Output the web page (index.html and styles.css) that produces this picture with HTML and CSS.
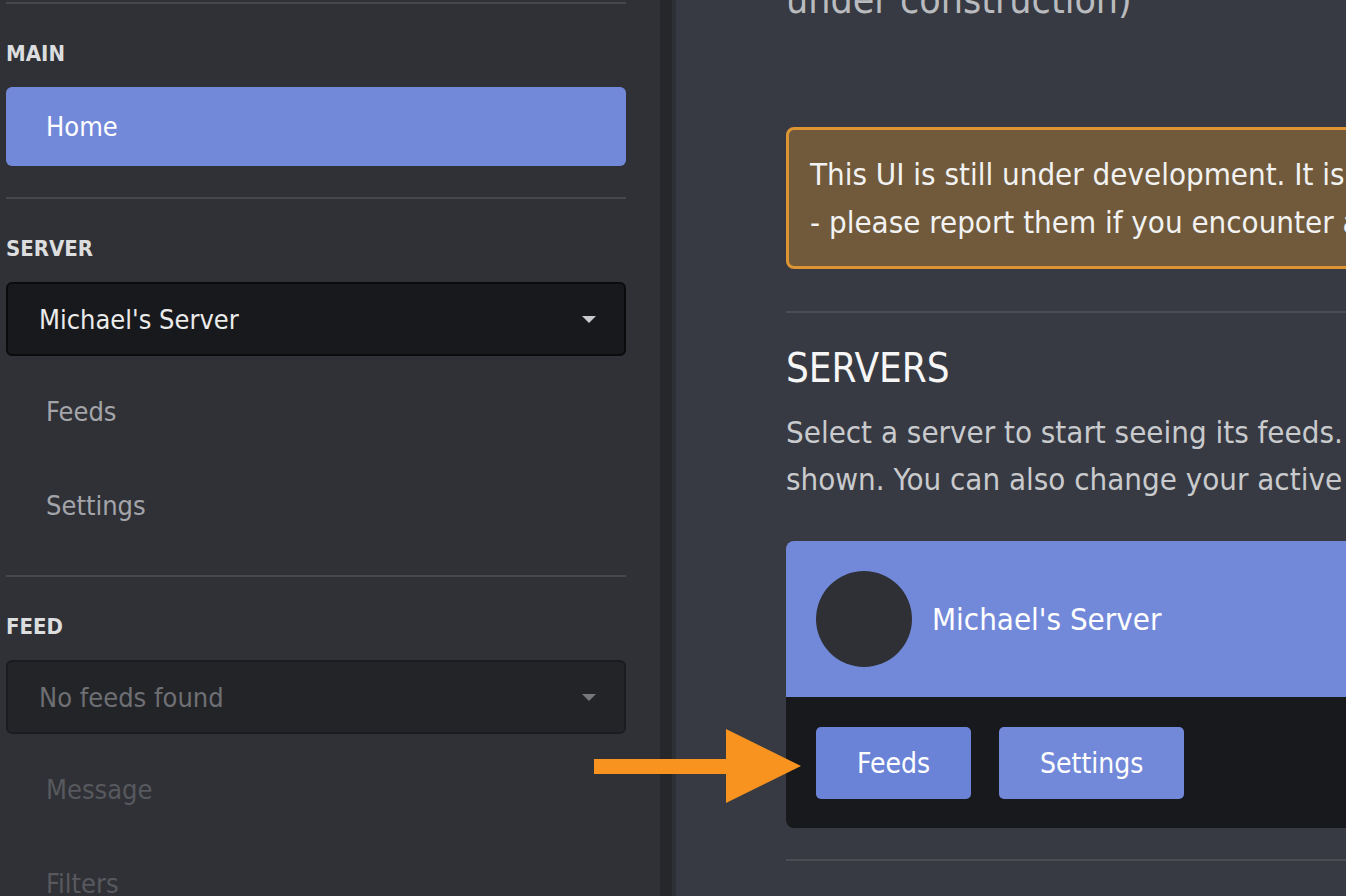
FILE: index.html
```html
<!DOCTYPE html>
<html lang="en">
<head>
<meta charset="utf-8">
<title>Control Panel</title>
<link rel="stylesheet" href="styles.css">
</head>
<body>
<div class="app">
  <aside class="sidebar">
    <section class="side-section side-section--first">
      <hr class="side-rule">
      <h3 class="side-label">MAIN</h3>
      <a class="side-active">Home</a>
    </section>
    <section class="side-section">
      <hr class="side-rule">
      <h3 class="side-label">SERVER</h3>
      <div class="select">
        <span>Michael's Server</span>
        <span class="caret"></span>
      </div>
      <a class="side-link">Feeds</a>
      <a class="side-link">Settings</a>
    </section>
    <section class="side-section">
      <hr class="side-rule">
      <h3 class="side-label">FEED</h3>
      <div class="select select--disabled">
        <span>No feeds found</span>
        <span class="caret"></span>
      </div>
      <a class="side-link side-link--disabled">Message</a>
      <a class="side-link side-link--disabled">Filters</a>
    </section>
  </aside>
  <div class="scroll-gutter"><div class="scroll-track"></div><div class="scroll-edge"></div></div>
  <main class="main">
    <div class="content">
      <h1 class="title">under construction)</h1>
      <div class="alert">This UI is still under development. It is likely that there will be bugs<br>- please report them if you encounter any so they can be fixed as soon as possible.</div>
      <hr class="main-rule">
      <h2 class="heading">SERVERS</h2>
      <p class="lead">Select a server to start seeing its feeds. Only servers that you have permissions to manage are<br>shown. You can also change your active server from the sidebar on the left.</p>
      <div class="card">
        <div class="card-head">
          <div class="avatar"></div>
          <div class="card-name">Michael's Server</div>
        </div>
        <div class="card-body">
          <button class="btn btn--hover">Feeds</button>
          <button class="btn">Settings</button>
        </div>
      </div>
      <hr class="main-rule main-rule--bottom">
    </div>
  </main>
  <svg class="pointer-arrow" width="210" height="76" viewBox="0 0 210 76" aria-hidden="true">
    <rect x="0" y="30" width="136" height="15" fill="#f7931e"/>
    <polygon points="132,0 207,37 132,74" fill="#f7931e"/>
  </svg>
</div>
</body>
</html>
```

FILE: styles.css
```css
* { box-sizing: border-box; }
html, body { margin: 0; padding: 0; }
body {
  background: #373a42;
  font-family: "DejaVu Sans Condensed", "DejaVu Sans", sans-serif;
  color: #fff;
  overflow: hidden;
}
.app {
  display: flex;
  height: 896px;
  position: relative;
  overflow: hidden;
}
.sidebar {
  width: 660px;
  flex: none;
  background: #303136;
  padding: 2px 34px 0 6px;
}
.side-section { display: flex; flex-direction: column; padding-bottom: 23px; }
.side-section--first { padding-bottom: 31px; }
.side-rule {
  margin: 0;
  border: 0;
  height: 2px;
  background: #46484e;
}
.side-label {
  margin: 36px 0 19px;
  font-family: "Liberation Sans Narrow", "DejaVu Sans Condensed", sans-serif;
  font-size: 22px;
  line-height: 28px;
  font-weight: bold;
  color: #dcddde;
}
.side-active {
  display: flex;
  align-items: center;
  height: 79px;
  padding-left: 40px;
  background: #7289da;
  border-radius: 6px;
  font-size: 27px;
  color: #fff;
}
.select {
  display: flex;
  align-items: center;
  justify-content: space-between;
  height: 74px;
  padding: 0 28px 0 31px;
  background: #18191c;
  border: 2px solid #0b0b0d;
  border-radius: 6px;
  font-size: 27px;
  color: #ebebeb;
  margin-bottom: 8px;
}
.caret {
  width: 0; height: 0;
  border-left: 7px solid transparent;
  border-right: 7px solid transparent;
  border-top: 7px solid #c9c9cb;
}
.select--disabled {
  background: #232428;
  border-color: #1b1c1f;
  color: #6e6f73;
}
.select--disabled .caret { border-top-color: #76777b; }
.side-link {
  display: flex;
  align-items: center;
  height: 94px;
  padding-left: 40px;
  font-size: 27px;
  color: #a3a5aa;
}
.side-link--disabled { color: #57595e; }
.scroll-gutter { display: flex; flex: none; }
.scroll-track { width: 12px; background: #26272b; }
.scroll-edge { width: 4px; background: #2e3036; }
.main {
  flex: 1;
  min-width: 0;
  padding-left: 110px;
  overflow: hidden;
}
.content { width: 1300px; }
.title {
  margin: -26px 0 0;
  font-size: 39px;
  line-height: 52px;
  font-weight: normal;
  color: #b9bbbe;
}
.alert {
  margin-top: 101px;
  padding: 20px 21px;
  background: #705a3b;
  border: 3px solid #dd9533;
  border-radius: 8px;
  font-size: 31px;
  line-height: 48px;
  color: #f2f2f2;
  white-space: nowrap;
}
.main-rule {
  margin: 42px 0 0;
  border: 0;
  height: 2px;
  background: #4b4d54;
}
.heading {
  margin: 32px 0 0;
  font-size: 40px;
  line-height: 46px;
  font-weight: normal;
  color: #f6f6f7;
}
.lead {
  margin: 18px 0 0;
  font-size: 31px;
  line-height: 47px;
  color: #c9cacd;
  white-space: nowrap;
}
.card {
  margin-top: 38px;
  border-radius: 8px;
  overflow: hidden;
}
.card-head {
  display: flex;
  align-items: center;
  gap: 20px;
  height: 156px;
  padding-left: 30px;
  background: #7289da;
}
.avatar {
  width: 96px;
  height: 96px;
  border-radius: 50%;
  background: #2e3035;
}
.card-name { font-size: 31px; color: #fff; }
.card-body {
  display: flex;
  gap: 28px;
  height: 131px;
  padding: 30px;
  background: #18191c;
}
.btn {
  height: 72px;
  padding: 0 41px;
  border: 0;
  border-radius: 5px;
  background: #7289da;
  color: #fff;
  font-family: inherit;
  font-size: 28px;
}
.btn--hover { background: #6a83d6; }
.main-rule--bottom { margin-top: 31px; }
.pointer-arrow {
  position: absolute;
  left: 594px;
  top: 729px;
}
```
